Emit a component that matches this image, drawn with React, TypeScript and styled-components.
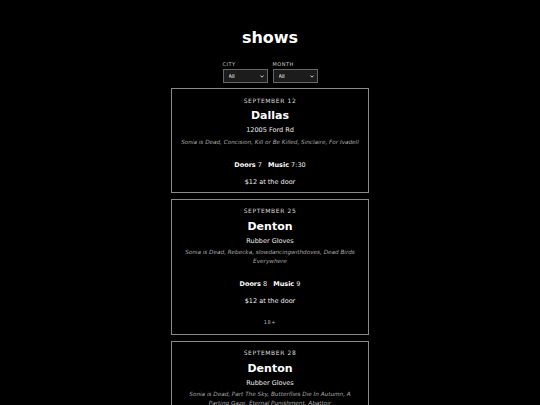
import React from "react";
import styled, { createGlobalStyle } from "styled-components";

const Global = createGlobalStyle`
  html, body { margin: 0; padding: 0; background: #000; }
  body { font-family: "DejaVu Sans", Verdana, sans-serif; color: #fff; }
`;

const Page = styled.div`
  display: flex;
  flex-direction: column;
  align-items: center;
  padding-top: 27px;
`;

const Title = styled.h1`
  margin: 0;
  font-size: 16px;
  line-height: 22px;
  font-weight: bold;
  color: #fff;
`;

const Filters = styled.div`
  display: flex;
  gap: 5px;
  margin-top: 12px;
`;

const Field = styled.label`
  display: flex;
  flex-direction: column;
  gap: 2px;
`;

const FieldLabel = styled.span`
  display: block;
  font-size: 5px;
  line-height: 6px;
  letter-spacing: 0.5px;
  text-transform: uppercase;
  color: #ccc;
`;

const SelectWrap = styled.div`
  position: relative;
  width: 45px;
  height: 14px;
`;

const Select = styled.select`
  display: block;
  appearance: none;
  width: 100%;
  height: 100%;
  box-sizing: border-box;
  margin: 0;
  padding: 0 0 0 5px;
  background: #1c1c1c;
  border: 1px solid #666;
  border-radius: 0;
  color: #fff;
  font-family: "DejaVu Sans", sans-serif;
  font-size: 5px;
  outline: none;
`;

const Chevron = styled.svg`
  position: absolute;
  right: 4px;
  top: 5.5px;
  width: 4px;
  height: 3px;
  pointer-events: none;
`;

const List = styled.div`
  width: 198px;
  display: flex;
  flex-direction: column;
  gap: 6px;
  margin-top: 5px;
`;

const Card = styled.div`
  box-sizing: border-box;
  border: 1px solid #8a8a8a;
  padding: 7.5px 4px 5px;
  text-align: center;
`;

const DateLine = styled.div`
  font-size: 6px;
  line-height: 8px;
  letter-spacing: 0.6px;
  text-transform: uppercase;
  color: #ddd;
`;

const City = styled.div`
  margin-top: 3.5px;
  font-size: 11px;
  line-height: 15px;
  font-weight: bold;
  color: #fff;
`;

const Venue = styled.div`
  margin-top: 2px;
  font-size: 6.5px;
  line-height: 10px;
  color: #eee;
`;

const Lineup = styled.div`
  margin-top: 2.5px;
  font-size: 5.7px;
  line-height: 9px;
  font-style: italic;
  color: #aaa;
  padding: 0 4px;
`;

const Times = styled.div`
  margin-top: 14px;
  font-size: 6.5px;
  line-height: 9px;
  color: #eee;
  b { color: #fff; }
`;

const Gap = styled.span`
  display: inline-block;
  width: 6px;
`;

const Price = styled.div`
  margin-top: 8px;
  font-size: 6.5px;
  line-height: 9px;
  color: #eee;
`;

const Age = styled.div`
  margin: 12px 0 2.5px;
  font-size: 5px;
  line-height: 8px;
  letter-spacing: 0.6px;
  color: #bbb;
`;

type Show = {
  date: string;
  city: string;
  venue: string;
  lineup: string;
  doors?: string;
  music?: string;
  price?: string;
  age?: string;
};

const shows: Show[] = [
  {
    date: "September 12",
    city: "Dallas",
    venue: "12005 Ford Rd",
    lineup: "Sonia is Dead, Concision, Kill or Be Killed, Sinclaire, For Ivadell",
    doors: "7",
    music: "7:30",
    price: "$12 at the door",
  },
  {
    date: "September 25",
    city: "Denton",
    venue: "Rubber Gloves",
    lineup: "Sonia is Dead, Rebecka, slowdancingwithdoves, Dead Birds Everywhere",
    doors: "8",
    music: "9",
    price: "$12 at the door",
    age: "18+",
  },
  {
    date: "September 28",
    city: "Denton",
    venue: "Rubber Gloves",
    lineup:
      "Sonia is Dead, Part The Sky, Butterflies Die In Autumn, A Parting Gaze, Eternal Punishment, Abattoir",
    doors: "7",
    music: "7:30",
    price: "$10 at the door",
  },
];

const Dropdown = ({ label }: { label: string }) => (
  <Field>
    <FieldLabel>{label}</FieldLabel>
    <SelectWrap>
      <Select defaultValue="all">
        <option value="all">All</option>
      </Select>
      <Chevron viewBox="0 0 4 3">
        <path d="M0.4 0.5 L2 2.2 L3.6 0.5" stroke="#ddd" strokeWidth="0.9" fill="none" />
      </Chevron>
    </SelectWrap>
  </Field>
);

export default function App() {
  return (
    <>
      <Global />
      <Page>
        <Title>shows</Title>
        <Filters>
          <Dropdown label="City" />
          <Dropdown label="Month" />
        </Filters>
        <List>
          {shows.map((s, i) => (
            <Card key={i}>
              <DateLine>{s.date}</DateLine>
              <City>{s.city}</City>
              <Venue>{s.venue}</Venue>
              <Lineup>{s.lineup}</Lineup>
              <Times>
                <b>Doors</b> {s.doors}
                <Gap />
                <b>Music</b> {s.music}
              </Times>
              <Price>{s.price}</Price>
              {s.age && <Age>{s.age}</Age>}
            </Card>
          ))}
        </List>
      </Page>
    </>
  );
}
